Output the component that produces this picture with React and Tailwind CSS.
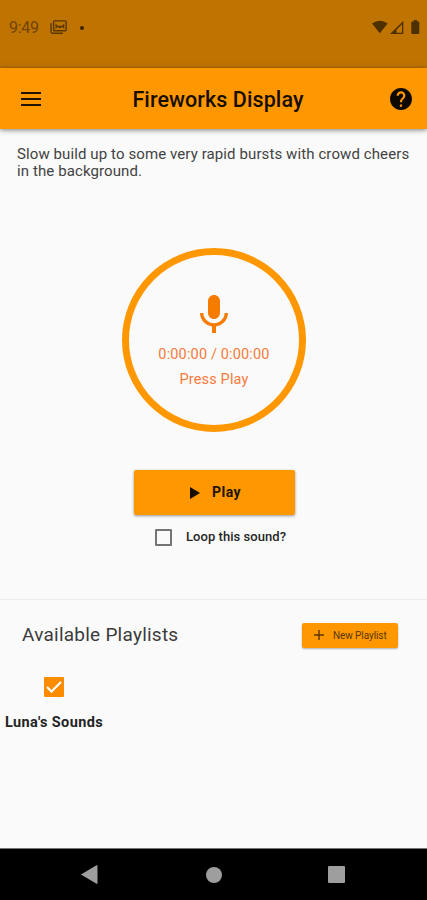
function StatusBar() {
  return (
    <div className="flex h-[68px] items-start justify-between bg-[#bf7300] text-[#4d3000]">
      <div className="flex h-[56px] items-center pl-[9px]">
        <span className="w-[41px] whitespace-nowrap text-[16px] tracking-[-0.3px] text-[#704500]">9:49</span>
        <svg className="-mt-0.5 h-[14px] w-[17px]" viewBox="0 0 17 14" fill="none" stroke="#5a3800" strokeWidth="1.4">
          <path d="M1 3.2v8.6q0 1.4 1.4 1.4H13" />
          <rect x="3.6" y=".9" width="12.6" height="9.8" rx="1" />
          <path d="M5.500 9.200V3.600l2.200 2.200h4.400l2.200-2.200v5.600l-2-2.200-2.400 1.400-2.400-1.400z" fill="#5a3800" stroke="none" />
        </svg>
        <span className="ml-[13px] size-[4px] rounded-full bg-[#3d2600]" />
      </div>
      <svg className="mt-[20px] mr-[7px] h-[14px] w-[48px]" viewBox="0 0 48 14" fill="currentColor">
        <path d="M0 3.4Q7.8-1.9 15.600 3.400L7.800 13.200z" />
        <path fillRule="evenodd" d="M31.300 1v13H18zM30 4.200l-5.500 5.500v3H30z" />
        <path d="M40.300 1.500h1.500V0h3.200v1.500h1.300q1 0 1 1V13q0 1-1 1h-6q-1 0-1-1V2.500q0-1 1-1z" />
      </svg>
    </div>
  );
}

function AppBar() {
  return (
    <header className="flex h-[61px] items-center justify-between bg-[#ff9800] pr-[15px] pl-[21px] shadow-[0_1px_5px_rgba(0,0,0,0.5)]">
      <svg className="h-[14px] w-[20px]" viewBox="0 0 20 14" fill="#211300">
        <path d="M0 0h20v2H0zM0 6h20v2H0zM0 12h20v2H0z" />
      </svg>
      <h1 className="mt-[3px] ml-[5px] whitespace-nowrap text-[21.5px] font-medium tracking-[0.08px] text-[#170e00]">Fireworks Display</h1>
      <svg className="size-[22px]" viewBox="2 2 20 20" fill="#0d0800">
        <path d="M12 2C6.480 2 2 6.480 2 12s4.480 10 10 10 10-4.480 10-10S17.520 2 12 2zm1 17h-2v-2h2v2zm2.070-7.750l-.9.920C13.450 12.900 13 13.500 13 15h-2v-.5c0-1.100.45-2.100 1.170-2.830l1.240-1.260c.37-.36.59-.86.59-1.410 0-1.100-.9-2-2-2s-2 .9-2 2H8c0-2.210 1.790-4 4-4s4 1.790 4 4c0 .88-.36 1.680-.93 2.250z" />
      </svg>
    </header>
  );
}

function Player() {
  return (
    <section className="flex h-[471px] flex-col items-center border-b border-[#ededed]">
      <p className="h-[119px] w-full pt-[17px] pl-[17px] text-[15px] leading-[17px] tracking-[0.1px] whitespace-nowrap text-[#424242]">
        Slow build up to some very rapid bursts with crowd cheers
        <br />
        in the background.
      </p>
      <div className="ml-px flex size-[184px] flex-col items-center rounded-full border-[7px] border-[#ff9800] pt-[40px] text-[#f67b3c]">
        <svg className="h-[38px] w-[28px]" viewBox="5 2 14 19" fill="#f57c00">
          <path d="M12 14c1.660 0 2.990-1.340 2.990-3L15 5c0-1.660-1.340-3-3-3S9 3.340 9 5v6c0 1.660 1.340 3 3 3zm5.300-3c0 3-2.540 5.100-5.300 5.100S6.700 14 6.700 11H5c0 3.410 2.720 6.230 6 6.720V21h2v-3.280c3.280-.48 6-3.300 6-6.720h-1.700z" />
        </svg>
        <span className="mt-[9px] whitespace-nowrap text-[14.5px] leading-[25px] tracking-[0.15px]">0:00:00 / 0:00:00</span>
        <span className="whitespace-nowrap text-[14.5px] leading-[25px] tracking-[0.15px]">Press Play</span>
      </div>
      <button className="mt-[38px] ml-px flex h-[45px] w-[161px] items-center justify-center rounded-[2px] bg-[#ff9800] pl-[3px] text-[14px] font-bold tracking-[0.4px] text-[#211300] shadow-[0_1px_3px_rgba(0,0,0,0.4)]">
        <svg className="mr-[12px] h-[12px] w-[10px]" viewBox="0 0 10 12" fill="#170e00">
          <path d="M0 0l10 6-10 6z" />
        </svg>
        Play
      </button>
      <label className="mt-[13px] ml-[14px] flex h-[18px] items-center text-[13px] font-medium tracking-[0.05px] text-[#262626]">
        <span className="mr-[14px] size-[17px] rounded-[1px] border-2 border-[#757575]" />
        <span className="whitespace-nowrap">Loop this sound?</span>
      </label>
    </section>
  );
}

function Playlists() {
  return (
    <section className="flex-1">
      <div className="flex h-[70px] items-center justify-between pr-[29px] pl-[22px]">
        <h2 className="whitespace-nowrap text-[19px] tracking-[0.24px] text-[#3b3b3b]">Available Playlists</h2>
        <button className="flex h-[25px] w-[96px] items-center rounded-[2px] bg-[#ff9800] pl-[12px] text-[10px] tracking-[-0.08px] whitespace-nowrap text-[#593600] shadow-[0_1px_2px_rgba(0,0,0,0.3)]">
          <svg className="mr-[9px] size-[10px] shrink-0" viewBox="0 0 10 10" stroke="#593600" strokeWidth="1.400">
            <path d="M5 0v10M0 5h10" />
          </svg>
          New Playlist
        </button>
      </div>
      <div className="flex w-[108px] flex-col items-center pt-[7px]">
        <span className="flex size-[20px] items-center justify-center rounded-[1px] bg-[#fb8c00]">
          <svg className="h-[12px] w-[16px]" viewBox="0 0 16 12" fill="none" stroke="#fff" strokeWidth="2.200">
            <path d="M1 6l4.500 4.500L15 1" />
          </svg>
        </span>
        <span className="mt-[16px] whitespace-nowrap text-[14.5px] leading-[20px] font-bold tracking-[0.38px] text-[#242424]">Luna's Sounds</span>
      </div>
    </section>
  );
}

function NavigationBar() {
  return (
    <nav className="flex h-[52px] items-center border-t border-[#777] bg-black pl-[81px]">
      <svg className="h-[19px] w-[17px]" viewBox="0 0 17 19" fill="#9e9e9e">
        <path d="M0 9.500L15.500.3q1-.5 1 .5v17.400q0 1-1 .5z" />
      </svg>
      <span className="ml-[108px] size-[16px] rounded-full bg-[#9e9e9e]" />
      <span className="ml-[106px] size-[17px] rounded-[1px] bg-[#9e9e9e]" />
    </nav>
  );
}

export default function App() {
  return (
    <main className="flex h-[900px] w-[427px] flex-col overflow-hidden bg-[#fafafa] font-[Roboto,sans-serif]">
      <StatusBar />
      <AppBar />
      <Player />
      <Playlists />
      <NavigationBar />
    </main>
  );
}
